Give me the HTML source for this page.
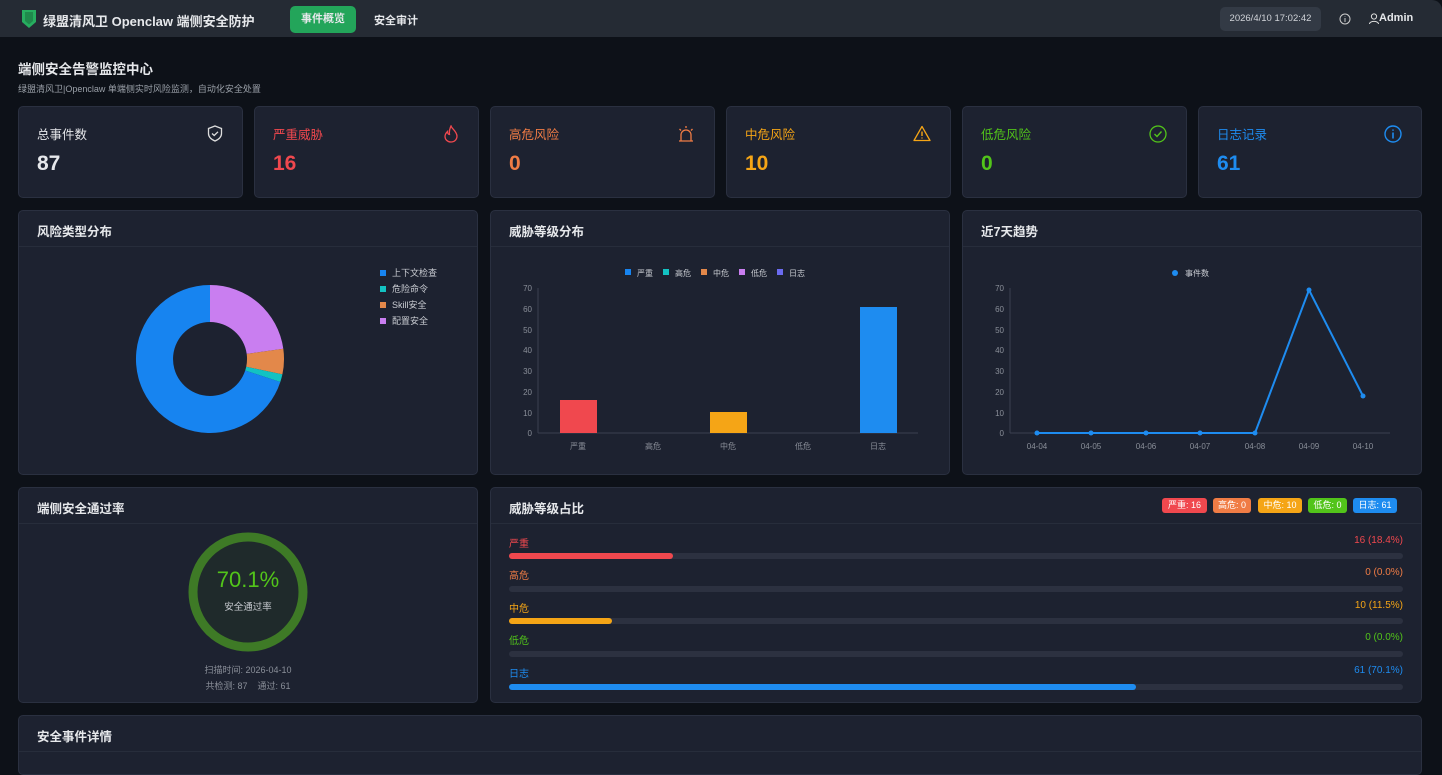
<!DOCTYPE html>
<html><head><meta charset="utf-8"><style>
*{box-sizing:border-box;margin:0;padding:0}
body{width:1442px;height:743px;overflow:hidden;background:#0d1118;font-family:"Liberation Sans","Noto Sans CJK SC",sans-serif;color:#e6e8eb;position:relative}
.hdr{position:absolute;left:0;top:0;width:1442px;height:37px;background:#252b34;border-radius:0 10px 0 0}
.abs{position:absolute}
.card{position:absolute;background:#1d2230;border:1px solid #2a3040;border-radius:5px}
.st .t{position:absolute;left:18px;top:17px;font-size:12.5px}
.st .v{position:absolute;left:18px;top:45px;font-size:21px;font-weight:bold}
.st svg{position:absolute;right:19px;top:18px}
.ch{position:absolute;left:0;top:0;right:0;height:36px;border-bottom:1px solid #272d3b;font-size:12.5px;font-weight:bold;padding:10px 0 0 18px;color:#e6e8eb}
.ax{font-size:8px;fill:#8a8f99}
.row{position:absolute;left:509px;width:894px;font-size:10px}
.row .l{position:absolute;left:0}
.row .r{position:absolute;right:0}
.bar{position:absolute;left:509px;width:894px;height:6px;border-radius:3px;background:#2c3140}
.bar i{display:block;height:6px;border-radius:3px}
.tag{position:absolute;top:498px;height:15px;border-radius:3px;font-size:9px;color:#fff;text-align:center;line-height:15px}
</style></head><body>
<div class="hdr"></div>
<svg class="abs" style="left:22px;top:10px" width="14" height="18" viewBox="0 0 14 18"><path d="M0 0H14V12L7 18L0 12Z" fill="#27ae60"/><path d="M3 2H11V11L7 14.5L3 11Z" fill="#1f8a4c"/></svg>
<div class="abs" style="left:43px;top:11px;font-size:13px;font-weight:bold">绿盟清风卫 Openclaw 端侧安全防护</div>
<div class="abs" style="left:290px;top:6px;width:66px;height:27px;background:#23a55a;border-radius:5px;font-size:11px;font-weight:bold;text-align:center;line-height:27px">事件概览</div>
<div class="abs" style="left:374px;top:12px;font-size:11px;font-weight:bold">安全审计</div>
<div class="abs" style="left:1220px;top:7px;width:101px;height:24px;background:#333a45;border-radius:5px;font-size:9.5px;text-align:center;line-height:24px;color:#d0d3d8">2026/4/10 17:02:42</div>
<svg class="abs" style="left:1339px;top:13px" width="12" height="12" viewBox="0 0 12 12"><circle cx="6" cy="6" r="5" fill="none" stroke="#ccc" stroke-width="1"/><path d="M6 5V9M6 3.2V3.8" stroke="#ccc"/></svg>
<svg class="abs" style="left:1369px;top:13px" width="10" height="11" viewBox="0 0 10 11"><circle cx="5" cy="3.5" r="2.6" fill="none" stroke="#ddd"/><path d="M0.5 11C0.5 7.5 9.5 7.5 9.5 11" fill="none" stroke="#ddd"/></svg>
<div class="abs" style="left:1379px;top:12px;font-size:11px;font-weight:bold">Admin</div>

<div class="abs" style="left:18px;top:58px;font-size:13.5px;font-weight:bold">端侧安全告警监控中心</div>
<div class="abs" style="left:18px;top:82px;font-size:9px;color:#9aa0a8">绿盟清风卫|Openclaw 单端侧实时风险监测，自动化安全处置</div>

<div class="card st" style="left:18px;top:106px;width:225px;height:92px"><div class="t">总事件数</div><div class="v">87</div><svg width="16" height="17" viewBox="0 0 16 17"><path d="M8 1L14.5 3.5V8.5C14.5 12 11.5 14.5 8 16C4.5 14.5 1.5 12 1.5 8.5V3.5Z" fill="none" stroke="#ddd" stroke-width="1.3"/><path d="M5 8.5L7.2 10.5L11 6.8" fill="none" stroke="#ddd" stroke-width="1.3"/></svg></div>
<div class="card st" style="left:254px;top:106px;width:225px;height:92px"><div class="t" style="color:#f0484e">严重威胁</div><div class="v" style="color:#f0484e">16</div><svg width="16" height="18" viewBox="0 0 16 18"><path d="M8 1C9 4 13.5 6 14 11C14 14.5 11.5 17 8 17C4.5 17 2 14.5 2 11.5C2 9 3.5 7.5 4.5 6.5C4.5 8.5 5.5 9.5 6.5 9.5C6 6 7 3 8 1Z" fill="none" stroke="#f0484e" stroke-width="1.3"/></svg></div>
<div class="card st" style="left:490px;top:106px;width:225px;height:92px"><div class="t" style="color:#f07c45">高危风险</div><div class="v" style="color:#f07c45">0</div><svg width="18" height="18" viewBox="0 0 18 18"><path d="M4 16V10A5 5 0 0 1 14 10V16M2 16H16M9 1V3M2.5 4L4 5.5M15.5 4L14 5.5" fill="none" stroke="#f07c45" stroke-width="1.3"/></svg></div>
<div class="card st" style="left:726px;top:106px;width:225px;height:92px"><div class="t" style="color:#f5a516">中危风险</div><div class="v" style="color:#f5a516">10</div><svg width="18" height="17" viewBox="0 0 18 17"><path d="M9 1.5L17 15.5H1Z" fill="none" stroke="#f5a516" stroke-width="1.3" stroke-linejoin="round"/><path d="M9 6.5V11M9 12.5V13.5" stroke="#f5a516" stroke-width="1.4"/></svg></div>
<div class="card st" style="left:962px;top:106px;width:225px;height:92px"><div class="t" style="color:#52c41a">低危风险</div><div class="v" style="color:#52c41a">0</div><svg width="18" height="18" viewBox="0 0 18 18"><circle cx="9" cy="9" r="8" fill="none" stroke="#52c41a" stroke-width="1.3"/><path d="M5.5 9L8 11.5L12.5 6.5" fill="none" stroke="#52c41a" stroke-width="1.4"/></svg></div>
<div class="card st" style="left:1198px;top:106px;width:224px;height:92px"><div class="t" style="color:#1e8cf0">日志记录</div><div class="v" style="color:#1e8cf0">61</div><svg width="18" height="18" viewBox="0 0 18 18"><circle cx="9" cy="9" r="8" fill="none" stroke="#1e8cf0" stroke-width="1.4"/><path d="M9 7.5V13.5M9 4.5V5.8" stroke="#1e8cf0" stroke-width="1.6"/></svg></div>

<div class="card" style="left:18px;top:210px;width:460px;height:265px"><div class="ch">风险类型分布</div></div>
<svg class="abs" style="left:0;top:0" width="480" height="480" viewBox="0 0 480 480">
<g transform="translate(210,359)">
<path d="M0 -74A74 74 0 0 1 73.3 -10.2L36.7 -5.1A37 37 0 0 0 0 -37Z" fill="#c97ef0"/>
<path d="M73.3 -10.2A74 74 0 0 1 72.4 15.4L36.2 7.7A37 37 0 0 0 36.7 -5.1Z" fill="#e3884a"/>
<path d="M72.4 15.4A74 74 0 0 1 70.3 23L35.2 11.5A37 37 0 0 0 36.2 7.7Z" fill="#13c2c2"/>
<path d="M70.3 23A74 74 0 1 1 0 -74L0 -37A37 37 0 1 0 35.2 11.5Z" fill="#1784f0"/>
</g>
<g font-size="9" fill="#c9ccd2">
<rect x="380" y="270" width="6" height="6" fill="#1784f0"/><text x="392" y="276">上下文检查</text>
<rect x="380" y="286" width="6" height="6" fill="#13c2c2"/><text x="392" y="292">危险命令</text>
<rect x="380" y="302" width="6" height="6" fill="#e3884a"/><text x="392" y="308">Skill安全</text>
<rect x="380" y="318" width="6" height="6" fill="#c97ef0"/><text x="392" y="324">配置安全</text>
</g></svg>

<div class="card" style="left:490px;top:210px;width:460px;height:265px"><div class="ch">威胁等级分布</div></div>
<svg class="abs" style="left:490px;top:210px" width="460" height="265">
<g font-size="8" fill="#c9ccd2">
<rect x="135" y="59" width="6" height="6" fill="#1784f0"/><text x="147" y="66">严重</text>
<rect x="173" y="59" width="6" height="6" fill="#13c2c2"/><text x="185" y="66">高危</text>
<rect x="211" y="59" width="6" height="6" fill="#e3884a"/><text x="223" y="66">中危</text>
<rect x="249" y="59" width="6" height="6" fill="#c97ef0"/><text x="261" y="66">低危</text>
<rect x="287" y="59" width="6" height="6" fill="#6b6bf0"/><text x="299" y="66">日志</text>
</g>
<g class="ax" text-anchor="end"><text x="42" y="226">0</text><text x="42" y="206">10</text><text x="42" y="185">20</text><text x="42" y="164">30</text><text x="42" y="143">40</text><text x="42" y="123">50</text><text x="42" y="102">60</text><text x="42" y="81">70</text></g>
<line x1="48" y1="78" x2="48" y2="223" stroke="#3a4050"/><line x1="48" y1="223" x2="428" y2="223" stroke="#3a4050"/>
<rect x="70" y="190" width="37" height="33" fill="#f0484e"/>
<rect x="220" y="202" width="37" height="21" fill="#f5a516"/>
<rect x="370" y="97" width="37" height="126" fill="#1e8cf0"/>
<g class="ax" text-anchor="middle"><text x="88" y="239">严重</text><text x="163" y="239">高危</text><text x="238" y="239">中危</text><text x="313" y="239">低危</text><text x="388" y="239">日志</text></g>
</svg>

<div class="card" style="left:962px;top:210px;width:460px;height:265px"><div class="ch">近7天趋势</div></div>
<svg class="abs" style="left:962px;top:210px" width="460" height="265">
<circle cx="213" cy="63" r="3" fill="#1e8cf0"/><text x="223" y="66" font-size="8" fill="#c9ccd2">事件数</text>
<g class="ax" text-anchor="end"><text x="42" y="226">0</text><text x="42" y="206">10</text><text x="42" y="185">20</text><text x="42" y="164">30</text><text x="42" y="143">40</text><text x="42" y="123">50</text><text x="42" y="102">60</text><text x="42" y="81">70</text></g>
<line x1="48" y1="78" x2="48" y2="223" stroke="#3a4050"/><line x1="48" y1="223" x2="428" y2="223" stroke="#3a4050"/>
<polyline points="75,223 129,223 184,223 238,223 293,223 347,80 401,186" fill="none" stroke="#1e8cf0" stroke-width="2"/>
<g fill="#1e8cf0"><circle cx="75" cy="223" r="2.5"/><circle cx="129" cy="223" r="2.5"/><circle cx="184" cy="223" r="2.5"/><circle cx="238" cy="223" r="2.5"/><circle cx="293" cy="223" r="2.5"/><circle cx="347" cy="80" r="2.5"/><circle cx="401" cy="186" r="2.5"/></g>
<g class="ax" text-anchor="middle"><text x="75" y="239">04-04</text><text x="129" y="239">04-05</text><text x="184" y="239">04-06</text><text x="238" y="239">04-07</text><text x="293" y="239">04-08</text><text x="347" y="239">04-09</text><text x="401" y="239">04-10</text></g>
</svg>

<div class="card" style="left:18px;top:487px;width:460px;height:216px"><div class="ch">端侧安全通过率</div></div>
<svg class="abs" style="left:188px;top:532px" width="120" height="120"><circle cx="60" cy="60" r="55" fill="#1f2a2b" stroke="#3e7a26" stroke-width="9"/></svg>
<div class="abs" style="left:188px;top:567px;width:120px;text-align:center;font-size:22px;color:#52c41a">70.1%</div>
<div class="abs" style="left:188px;top:599px;width:120px;text-align:center;font-size:9.5px;color:#c9ccd2">安全通过率</div>
<div class="abs" style="left:148px;top:663px;width:200px;text-align:center;font-size:9px;color:#8a8f99">扫描时间: 2026-04-10</div>
<div class="abs" style="left:148px;top:679px;width:200px;text-align:center;font-size:9px;color:#8a8f99">共检测: 87&nbsp;&nbsp;&nbsp; 通过: 61</div>

<div class="card" style="left:490px;top:487px;width:932px;height:216px"><div class="ch">威胁等级占比</div></div>
<div class="tag" style="left:1162px;width:45px;background:#f0484e">严重: 16</div>
<div class="tag" style="left:1213px;width:38px;background:#f07c45">高危: 0</div>
<div class="tag" style="left:1258px;width:44px;background:#f5a516">中危: 10</div>
<div class="tag" style="left:1308px;width:39px;background:#52c41a">低危: 0</div>
<div class="tag" style="left:1353px;width:44px;background:#1e8cf0">日志: 61</div>

<div class="row" style="top:535px;color:#f0484e"><span class="l">严重</span><span class="r">16 (18.4%)</span></div>
<div class="bar" style="top:553px"><i style="width:18.4%;background:#f0484e"></i></div>
<div class="row" style="top:567px;color:#f07c45"><span class="l">高危</span><span class="r">0 (0.0%)</span></div>
<div class="bar" style="top:586px"></div>
<div class="row" style="top:600px;color:#f5a516"><span class="l">中危</span><span class="r">10 (11.5%)</span></div>
<div class="bar" style="top:618px"><i style="width:11.5%;background:#f5a516"></i></div>
<div class="row" style="top:632px;color:#52c41a"><span class="l">低危</span><span class="r">0 (0.0%)</span></div>
<div class="bar" style="top:651px"></div>
<div class="row" style="top:665px;color:#1e8cf0"><span class="l">日志</span><span class="r">61 (70.1%)</span></div>
<div class="bar" style="top:684px"><i style="width:70.1%;background:#1e8cf0"></i></div>

<div class="card" style="left:18px;top:715px;width:1404px;height:60px"><div class="ch">安全事件详情</div></div>
</body></html>
